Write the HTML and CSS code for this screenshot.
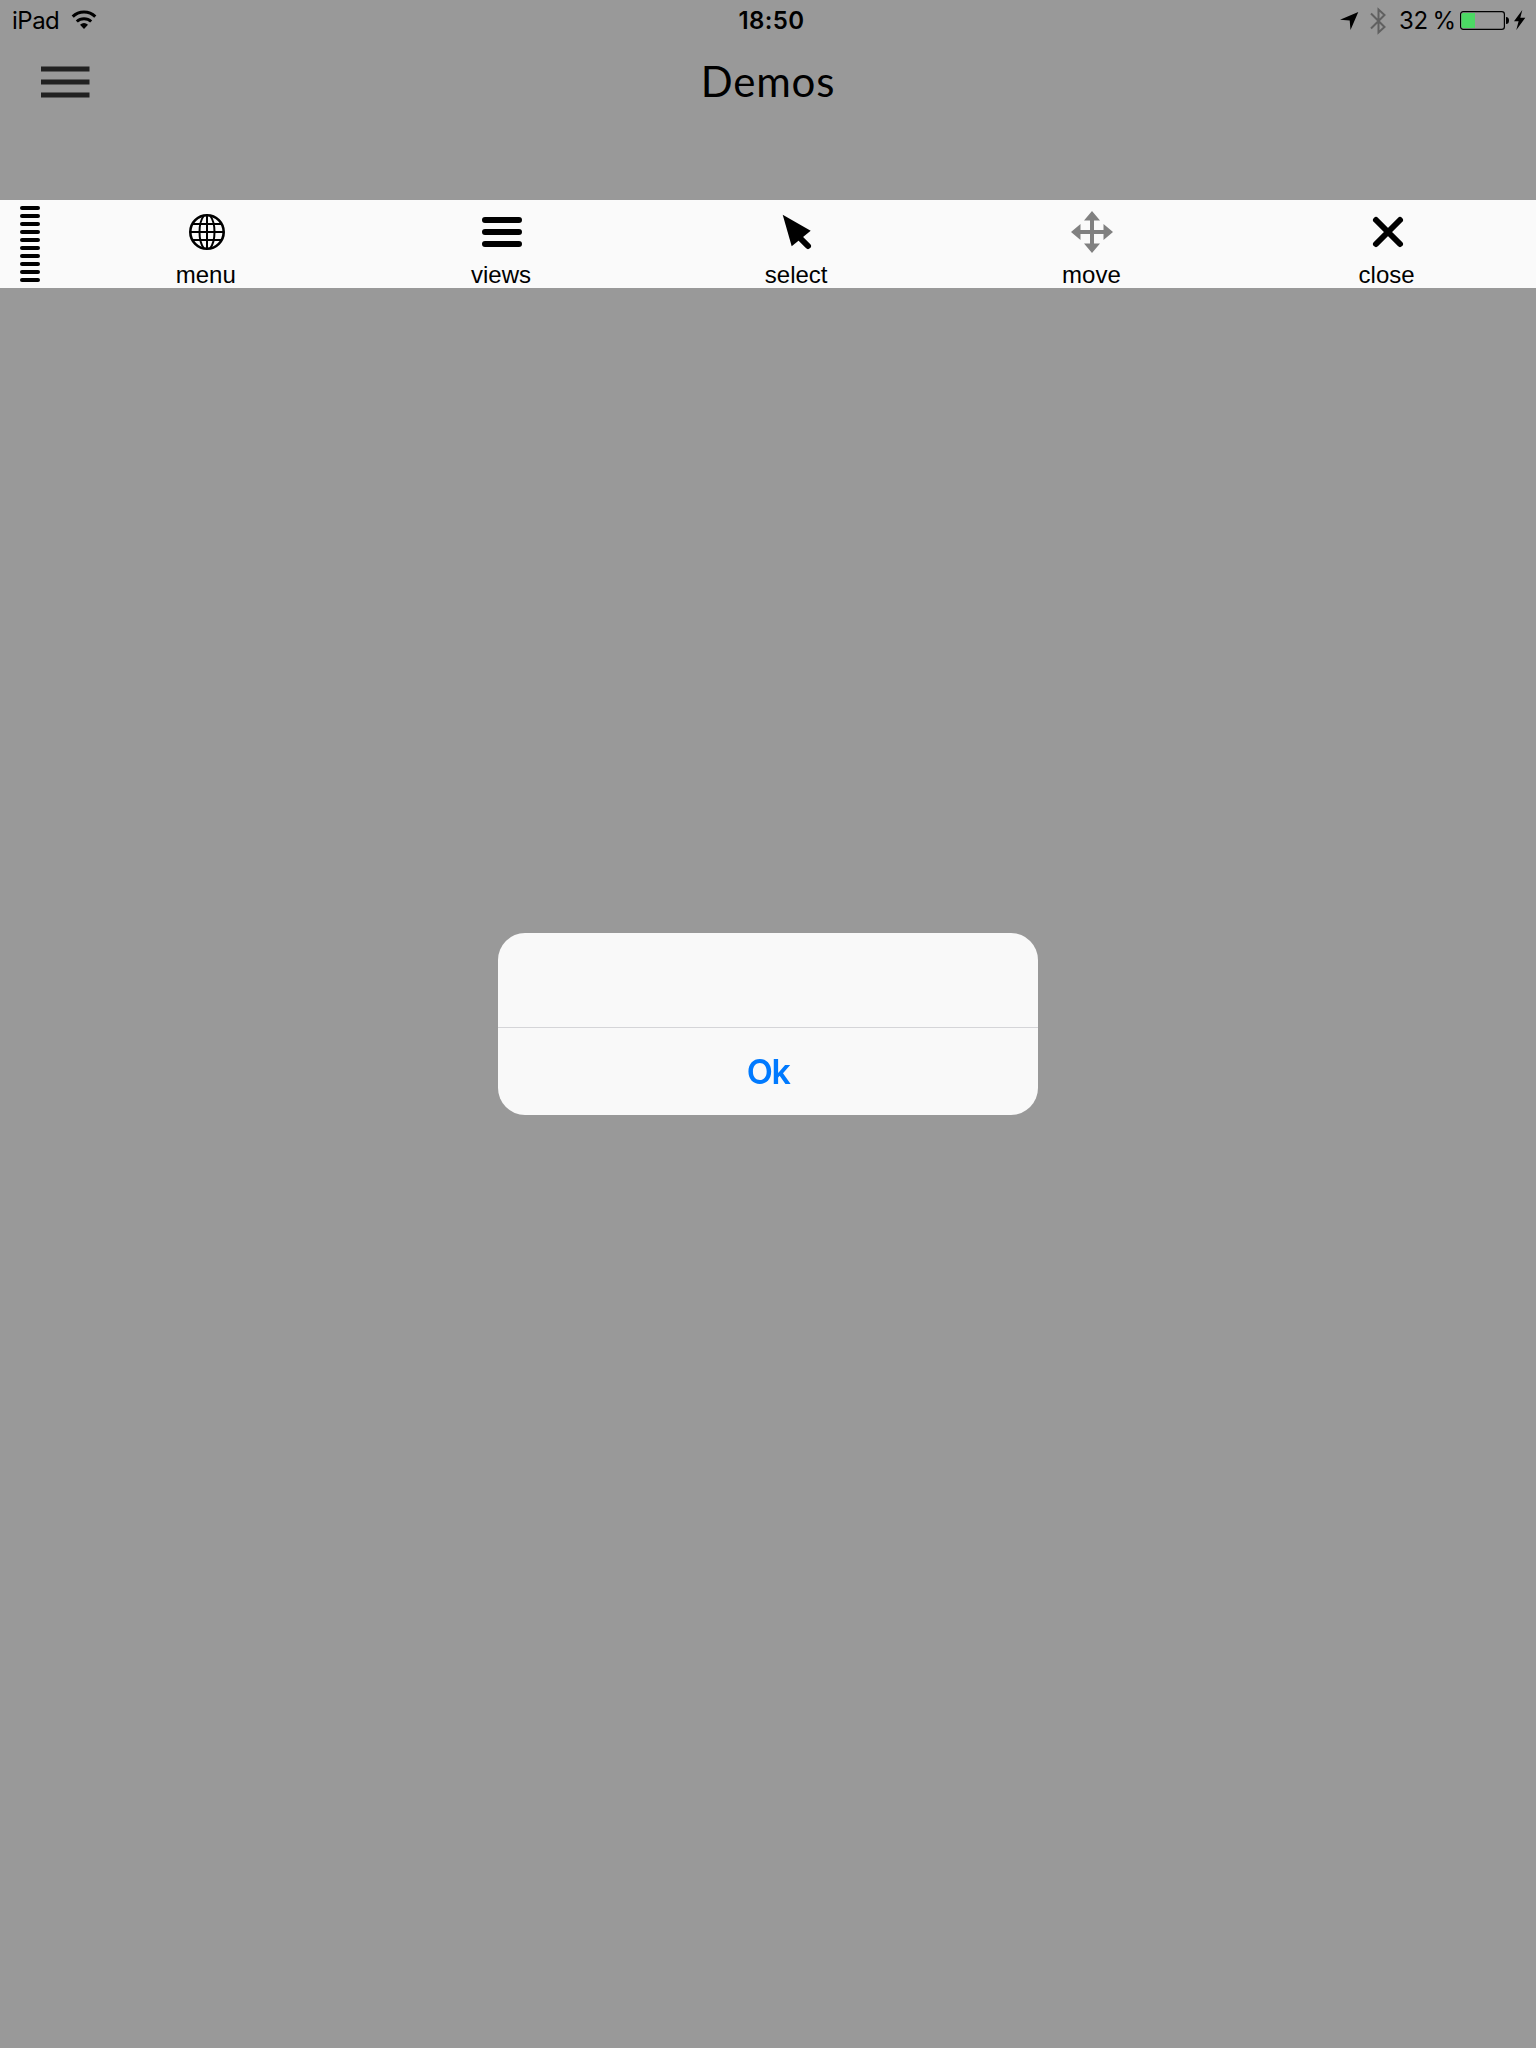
FILE: index.html
```html
<!DOCTYPE html>
<html lang="en">
<head>
<meta charset="utf-8">
<title>Demos</title>
<link rel="stylesheet" href="styles.css">
</head>
<body>
<header class="status">
  <div class="status-left">
    <span class="device">iPad</span>
    <svg class="wifi" width="26" height="20" viewBox="0 0 26 20" fill="none" stroke="#000">
      <path d="M1.7 6.6A16 16 0 0 1 24.3 6.6" stroke-width="3"/>
      <path d="M5.8 11.500A10.500 10.500 0 0 1 20.2 11.500" stroke-width="3"/>
      <path d="M13 19L9 14.8Q13 11.2 17 14.8Z" fill="#000" stroke="none"/>
    </svg>
  </div>
  <time class="clock">18:50</time>
  <div class="status-right">
    <svg class="location" width="19" height="19" viewBox="0 0 19 19"><path d="M18.3 0L10.5 18L9.7 8.5L0 7.8Z"/></svg>
    <svg class="bluetooth" width="17" height="28" viewBox="0 0 17 28" fill="none" stroke="#606060" stroke-width="2"><path d="M1 6.5L14.5 20L8.5 25.5V2.5L14.5 8L1 21.5"/></svg>
    <span class="percent">32 %</span>
    <svg class="battery" width="50" height="20" viewBox="0 0 50 20">
      <rect x=".6" y=".6" width="43.8" height="17.8" rx="2.6" fill="none" stroke="#000" stroke-width="1.2"/>
      <path d="M3 2H15V17H3Q1.500 17 1.500 15.500V3.500Q1.500 2 3 2Z" fill="#4cd964"/>
      <path d="M46 6Q49 6 49 9.500Q49 13 46 13Z"/>
    </svg>
    <svg class="bolt" width="12" height="20" viewBox="0 0 12 20"><path d="M8.300 0L0 11.200H4.600L2.300 20L11.300 7.800H6.300Z"/></svg>
  </div>
</header>
<nav class="navbar">
  <svg class="hamburger" width="49" height="33" viewBox="0 0 49 33" fill="#212121"><path d="M0 .5H48.500V5.500H0ZM0 13.500H48.500V18.500H0ZM0 26.500H48.500V31.500H0Z"/></svg>
  <h1 class="title">Demos</h1>
</nav>
<section class="toolbar">
  <div class="grip"><i></i><i></i><i></i><i></i><i></i><i></i><i></i><i></i><i></i><i></i></div>
  <div class="tool">
    <svg width="48" height="48" viewBox="-24 -24 48 48" fill="none" stroke="#000" stroke-width="2">
      <circle r="16.700" stroke-width="2.600"/>
      <path d="M0-17V17M-17 0H17M-14.500-8H14.500M-14.500 8H14.500"/>
      <path d="M-3-16.500C-9-9-9 9-3 16.500M3-16.500C9-9 9 9 3 16.500"/>
    </svg>
    <span class="label">menu</span>
  </div>
  <div class="tool">
    <svg width="48" height="48" viewBox="-24 -24 48 48" stroke="#000" stroke-width="6" stroke-linecap="round"><path d="M-17-12H17M-17 0H17M-17 12H17"/></svg>
    <span class="label">views</span>
  </div>
  <div class="tool">
    <svg width="48" height="48" viewBox="-24 -24 48 48"><path d="M-14.300-17.200L13.700-1.200L-5.300 14.200Z"/><path d="M2 5L11 14" stroke="#000" stroke-width="6" stroke-linecap="round"/></svg>
    <span class="label">select</span>
  </div>
  <div class="tool">
    <svg width="48" height="48" viewBox="-24 -24 48 48" fill="#808080"><path d="M0-21L8-11.500H2V-2H11.500V-8L21 0L11.500 8V2H2V11.500H8L0 21L-8 11.500H-2V2H-11.500V8L-21 0L-11.500-8V-2H-2V-11.500H-8Z"/></svg>
    <span class="label">move</span>
  </div>
  <div class="tool">
    <svg width="48" height="48" viewBox="-24 -24 48 48" stroke="#000" stroke-width="6" stroke-linecap="round"><path d="M-12-12L12 12M12-12L-12 12"/></svg>
    <span class="label">close</span>
  </div>
</section>
<div class="overlay">
  <div class="alert" role="alertdialog">
    <div class="alert-body"></div>
    <button class="alert-button"><span class="ok">Ok</span></button>
  </div>
</div>
</body>
</html>
```
FILE: styles.css
```css
* { box-sizing: border-box; }
body {
  margin: 0;
  height: 2048px;
  overflow: hidden;
  background: #999;
  color: #000;
  font-family: Inter, "Liberation Sans", sans-serif;
}
svg { display: block; flex: none; }
.status {
  display: grid;
  grid-template-columns: 1fr auto 1fr;
  height: 40px;
  font-size: 24px;
  line-height: 42px;
}
.status-left, .status-right { display: flex; align-items: flex-start; }
.status-left { padding-left: 12px; }
.status-right { justify-content: flex-end; padding-right: 10px; }
.device { width: 59px; letter-spacing: -0.5px; }
.wifi { margin-top: 10px; }
.clock { padding-left: 7px; font-weight: 600; letter-spacing: 0.4px; }
.location { margin: 12px 11px 0 0; }
.bluetooth { margin: 7px 12px 0 0; }
.percent { width: 61px; white-space: nowrap; letter-spacing: -0.2px; word-spacing: -2px; }
.battery { margin: 11px 4px 0 0; }
.bolt { margin-top: 10px; }
.navbar {
  display: grid;
  grid-template-columns: 1fr auto 1fr;
  height: 160px;
  padding-left: 41px;
  padding-right: 41px;
}
.hamburger { margin-top: 26px; }
.title {
  margin: 13px 0 0;
  font: 400 42px/56px Lato, sans-serif;
  letter-spacing: 0.8px;
}
.toolbar {
  display: grid;
  grid-template-columns: 59.2px repeat(5, 1fr);
  height: 88px;
  padding-right: 0.8px;
  background: #fafafa;
}
.grip {
  display: flex;
  flex-direction: column;
  gap: 4px;
  width: 60px;
  padding: 6px 20px 0;
}
.grip i { height: 4px; border-radius: 2px; background: #000; }
.tool {
  display: flex;
  flex-direction: column;
  align-items: center;
  padding-top: 8px;
}
.label {
  margin-top: 5px;
  padding-right: 2px;
  font: 24px/27px "Liberation Sans", sans-serif;
}
.overlay {
  position: fixed;
  inset: 0;
  display: flex;
  align-items: center;
  justify-content: center;
}
.alert {
  width: 540px;
  height: 182px;
  overflow: hidden;
  border-radius: 27px;
  background: #f9f9f9;
}
.alert-body { height: 95px; border-bottom: 1px solid #d5d5d8; }
.alert-button {
  display: block;
  width: 100%;
  height: 87px;
  padding: 0;
  border: 0;
  background: none;
  color: #007aff;
  font: 600 34px/87px Inter, sans-serif;
}
.ok { letter-spacing: -1.5px; }
```
